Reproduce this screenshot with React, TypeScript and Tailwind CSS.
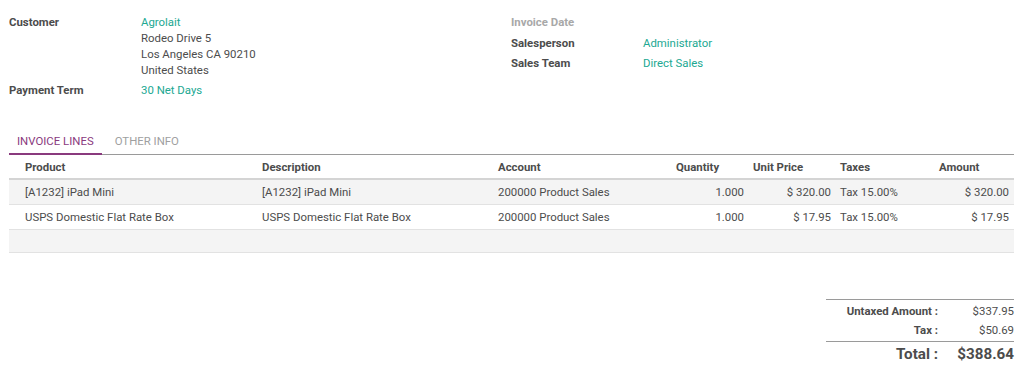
import React from "react";

const teal = "text-[#21a892]";

function Row({ label, children, grey }: { label: string; children?: React.ReactNode; grey?: boolean }) {
  return (
    <div className="flex mb-[4px]">
      <div className={`w-[132px] shrink-0 font-bold ${grey ? "text-[#a8a8a8]" : "text-[#4c4c4c]"}`}>{label}</div>
      <div>{children}</div>
    </div>
  );
}

const cols = "grid grid-cols-[249px_236px_178px_77px_87px_99px_79px]";

const lines = [
  { p: "[A1232] iPad Mini", d: "[A1232] iPad Mini", a: "200000 Product Sales", q: "1.000", u: "$ 320.00", t: "Tax 15.00%", m: "$ 320.00" },
  { p: "USPS Domestic Flat Rate Box", d: "USPS Domestic Flat Rate Box", a: "200000 Product Sales", q: "1.000", u: "$ 17.95", t: "Tax 15.00%", m: "$ 17.95" },
];

export default function App() {
  return (
    <div
      className="w-[1024px] h-[370px] bg-white text-[11.4px] leading-[16px] text-[#4c4c4c] overflow-hidden"
      style={{ fontFamily: "Roboto, 'Liberation Sans', sans-serif" }}
    >
      <div className="flex pl-[9px] pt-[14px]">
        <div className="w-[502px]">
          <Row label="Customer">
            <div className={teal}>Agrolait</div>
            <div>Rodeo Drive 5</div>
            <div>Los Angeles CA 90210</div>
            <div>United States</div>
          </Row>
          <Row label="Payment Term">
            <div className={teal}>30 Net Days</div>
          </Row>
        </div>
        <div>
          <Row label="Invoice Date" grey>
            <div>&nbsp;</div>
          </Row>
          <div className="h-[1px]" />
          <Row label="Salesperson">
            <div className={teal}>Administrator</div>
          </Row>
          <Row label="Sales Team">
            <div className={teal}>Direct Sales</div>
          </Row>
        </div>
      </div>

      <div className="mx-[10px] ml-[9px] mt-[31px]">
        <div className="flex border-b border-[#9a9a9a] uppercase">
          <div className="px-[8px] pb-[4px] text-[#8a3a7e] border-b-2 border-[#8a3a7e] mb-[-1px]">Invoice Lines</div>
          <div className="px-[8px] pb-[4px] ml-[5px] text-[#a0a0a0]">Other Info</div>
        </div>

        <div className={`${cols} h-[25px] items-center font-bold border-b-2 border-[#d4d4d4]`}>
          <div className="pl-[16px]">Product</div>
          <div className="pl-[4px]">Description</div>
          <div className="pl-[4px]">Account</div>
          <div className="pl-[4px]">Quantity</div>
          <div className="pl-[4px]">Unit Price</div>
          <div className="pl-[4px]">Taxes</div>
          <div className="pl-[4px]">Amount</div>
        </div>
        {lines.map((l, i) => (
          <div
            key={i}
            className={`${cols} h-[25px] items-center border-b border-[#e2e2e2] ${i % 2 === 0 ? "bg-[#f4f4f4]" : "bg-white"}`}
          >
            <div className="pl-[16px]">{l.p}</div>
            <div className="pl-[4px]">{l.d}</div>
            <div className="pl-[4px]">{l.a}</div>
            <div className="pr-[5px] text-right">{l.q}</div>
            <div className="pr-[5px] text-right">{l.u}</div>
            <div className="pl-[4px]">{l.t}</div>
            <div className="pr-[5px] text-right">{l.m}</div>
          </div>
        ))}
        <div className="h-[23px] bg-[#f4f4f4] border-b border-[#e2e2e2]" />
      </div>

      <div className="flex justify-end mr-[10px] mt-[46px]">
        <div className="w-[188px]">
          <div className="border-t border-[#9a9a9a] pt-[2px]">
            <div className="grid grid-cols-[119px_69px] h-[18px] items-center">
              <div className="text-right pr-[7px] font-bold">Untaxed Amount :</div>
              <div className="text-right">$337.95</div>
            </div>
            <div className="grid grid-cols-[119px_69px] h-[20px] items-center">
              <div className="text-right pr-[7px] font-bold">Tax :</div>
              <div className="text-right">$50.69</div>
            </div>
          </div>
          <div className="border-t border-[#9a9a9a] mt-[1px]">
            <div className="grid grid-cols-[119px_69px] h-[23px] items-center text-[15.2px] font-bold">
              <div className="text-right pr-[7px]">Total :</div>
              <div className="text-right">$388.64</div>
            </div>
          </div>
        </div>
      </div>
    </div>
  );
}
